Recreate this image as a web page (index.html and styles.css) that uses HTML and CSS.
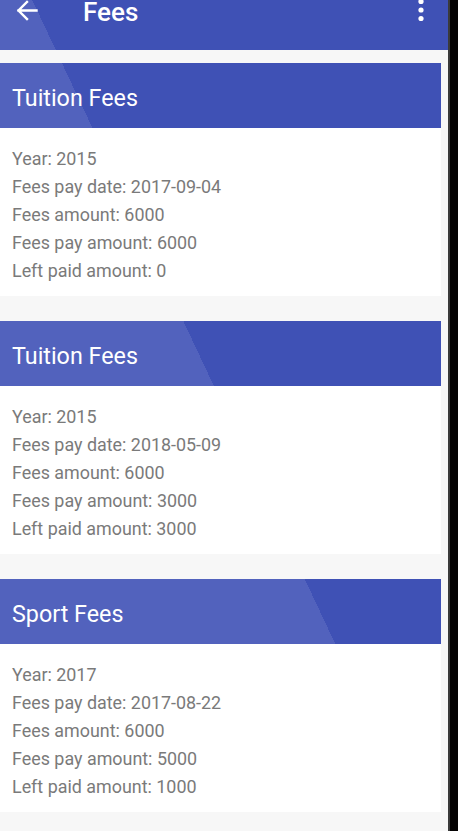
FILE: index.html
```html
<!DOCTYPE html>
<html lang="en">
<head>
<meta charset="utf-8">
<title>Fees</title>
<link rel="stylesheet" href="styles.css">
</head>
<body>
<div class="device">
  <div class="screen">
    <header class="appbar">
      <svg class="back" width="24" height="22" viewBox="0 0 24 22" aria-hidden="true">
        <path d="M21.5 10.5H3.5M12 2l-8.5 8.5L12 19" fill="none" stroke="#fff" stroke-width="2.4" stroke-linecap="square"/>
      </svg>
      <h1 class="title">Fees</h1>
      <svg class="more" width="8" height="24" viewBox="0 0 8 24" aria-hidden="true">
        <circle cx="4" cy="1.5" r="2.6" fill="#fff"/>
        <circle cx="4" cy="10" r="2.6" fill="#fff"/>
        <circle cx="4" cy="18.5" r="2.6" fill="#fff"/>
      </svg>
    </header>
    <main class="list">
      <section class="card">
        <h2 class="card-head">Tuition Fees</h2>
        <div class="card-body">
          <p>Year: 2015</p>
          <p>Fees pay date: 2017-09-04</p>
          <p>Fees amount: 6000</p>
          <p>Fees pay amount: 6000</p>
          <p>Left paid amount: 0</p>
        </div>
      </section>
      <section class="card">
        <h2 class="card-head">Tuition Fees</h2>
        <div class="card-body">
          <p>Year: 2015</p>
          <p>Fees pay date: 2018-05-09</p>
          <p>Fees amount: 6000</p>
          <p>Fees pay amount: 3000</p>
          <p>Left paid amount: 3000</p>
        </div>
      </section>
      <section class="card">
        <h2 class="card-head">Sport Fees</h2>
        <div class="card-body">
          <p>Year: 2017</p>
          <p>Fees pay date: 2017-08-22</p>
          <p>Fees amount: 6000</p>
          <p>Fees pay amount: 5000</p>
          <p>Left paid amount: 1000</p>
        </div>
      </section>
    </main>
  </div>
  <div class="frame"></div>
</div>
</body>
</html>
```
FILE: styles.css
```css
html, body {
  margin: 0;
  padding: 0;
  height: 100%;
}
body {
  font-family: Roboto, "Liberation Sans", sans-serif;
  background: #000;
  overflow: hidden;
}
.device {
  display: flex;
  height: 831px;
}
.screen {
  width: 448px;
  background: #f7f7f7;
  display: flex;
  flex-direction: column;
}
.frame {
  flex: 1;
  background: #050303;
  border-left: 2px solid #3a3a3a;
}
.appbar,
.card-head {
  background: linear-gradient(64.8deg, #5262bd 383px, #3f51b5 383px) fixed;
}
.appbar {
  height: 50px;
  display: flex;
  align-items: flex-start;
  color: #fff;
}
.back {
  margin-left: 15px;
  flex: none;
}
.title {
  margin: 0 0 0 44px;
  font-size: 26px;
  font-weight: 500;
  line-height: 25px;
  flex: 1;
}
.more {
  margin-right: 23px;
  flex: none;
}
.list {
  padding: 13px 7px 0 0;
  display: flex;
  flex-direction: column;
  gap: 25px;
}
.card {
  background: #fff;
}
.card-head {
  margin: 0;
  height: 65px;
  box-sizing: border-box;
  padding: 6px 0 0 12px;
  line-height: 58px;
  font-size: 23.3px;
  font-weight: 400;
  color: #fff;
}
.card-body {
  padding: 17px 0 11px 12px;
}
.card-body p {
  margin: 0;
  font-size: 17.9px;
  line-height: 28px;
  color: #7a7a7a;
}
```
